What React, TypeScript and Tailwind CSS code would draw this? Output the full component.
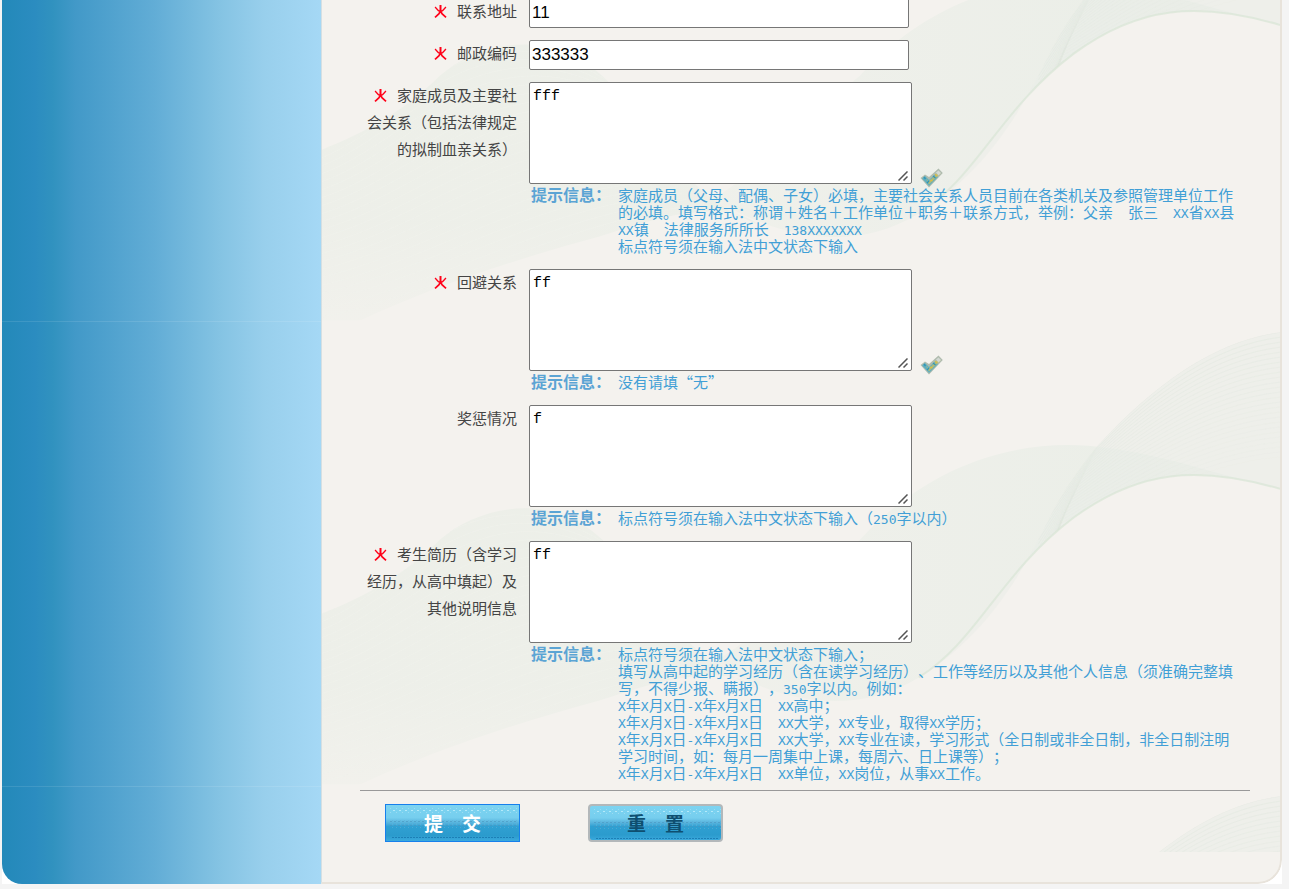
import React from "react";

const WAVE_TILES = [-144, 321, 786];

const LEFT_FAN =
  "M322 294 C365 277 405 255 440 220 C480 185 555 170 607 224 C650 270 690 345 760 369 C720 340 650 365 600 381 C500 408 410 440 340 475 L322 485 Z";
const RIGHT_FAN =
  "M1282 12 C1220 20 1160 60 1100 125 C1075 155 1060 180 1050 200 C1020 260 990 310 930 352 C980 315 1010 245 1075 198 C1140 150 1200 145 1282 169 Z";

function range(n: number) {
  return Array.from({ length: n }, (_, i) => i);
}

function Waves() {
  return (
    <svg
      className="absolute inset-0 h-full w-full"
      viewBox="322 0 960 884"
      preserveAspectRatio="none"
      aria-hidden="true"
    >
      <defs>
        <linearGradient id="ribbon" x1="0" y1="0" x2="1" y2="0">
          <stop offset="0" stopColor="#e9eee6" stopOpacity="0.4" />
          <stop offset="0.5" stopColor="#e8ede6" stopOpacity="0.6" />
          <stop offset="1" stopColor="#e2ebe1" stopOpacity="0.6" />
        </linearGradient>
        <linearGradient id="leftFade" x1="0" y1="0" x2="0" y2="1">
          <stop offset="0" stopColor="#e8ede5" stopOpacity="0.6" />
          <stop offset="0.6" stopColor="#e8ede5" stopOpacity="0.55" />
          <stop offset="1" stopColor="#e8ede5" stopOpacity="0.15" />
        </linearGradient>
        <clipPath id="tile">
          <rect x="322" y="0" width="960" height="465" />
        </clipPath>
        <clipPath id="lastTile">
          <rect x="322" y="0" width="960" height="68" />
        </clipPath>
        <clipPath id="leftFan">
          <path d={LEFT_FAN} />
        </clipPath>
        <clipPath id="rightFan">
          <path d={RIGHT_FAN} />
        </clipPath>
        <g id="wave">
          <path d={LEFT_FAN} fill="url(#leftFade)" />
          <path
            d="M680 359 C740 340 800 270 861 220 C930 145 1020 115 1110 128 C1170 136 1220 155 1282 169 C1200 145 1140 150 1075 198 C1000 255 980 320 920 358 C860 395 790 385 730 352 Z"
            fill="url(#ribbon)"
          />
          <path d={RIGHT_FAN} fill="#e9ede7" fillOpacity="0.55" />
          <g clipPath="url(#rightFan)">
            {range(26).map((i) => (
              <path
                key={`r${i}`}
                d={`M1282 ${12 + i * 5} C${1220 - i} ${20 + i * 5} ${1160 - i} ${60 + i * 5} ${1100 - i * 2} ${125 + i * 4} L1040 ${200 + i * 4}`}
                fill="none"
                stroke="#e0e7de"
                strokeOpacity={0.5 - i * 0.018}
              />
            ))}
          </g>
          <g clipPath="url(#leftFan)">
            {range(22).map((i) => (
              <path
                key={`l${i}`}
                d={`M322 ${294 + i * 8} C${400 + i * 3} ${262 + i * 8} ${470 + i * 4} ${140 + i * 11} ${607 + i * 4} ${224 + i * 6}`}
                fill="none"
                stroke="#f1f2ec"
                strokeOpacity="0.5"
              />
            ))}
          </g>
          <path
            d="M920 358 C980 320 1000 255 1075 198 C1140 150 1200 145 1282 169"
            fill="none"
            stroke="#d8e5d6"
            strokeOpacity="0.7"
            strokeWidth="2"
          />
        </g>
      </defs>
      {WAVE_TILES.map((y, i) => (
        <g key={y} transform={`translate(0 ${y})`}>
          <g clipPath={i === 2 ? "url(#lastTile)" : "url(#tile)"}>
            <use href="#wave" />
          </g>
        </g>
      ))}
    </svg>
  );
}

function RequiredMark() {
  return (
    <svg
      viewBox="0 0 13 13"
      className="mr-[10px] inline-block h-[13px] w-[13px] align-[-1px]"
      aria-hidden="true"
    >
      <g fill="none" stroke="#ff0018" strokeLinecap="square">
        <path d="M6.5 0.8V6" strokeWidth="2" />
        <path d="M1.5 2.5L4.5 5.8H8.5L11.5 2.5" strokeWidth="1.3" />
        <path d="M6.3 6.5L4.8 9L1.6 11.8M6.7 6.5L8.2 9L11.4 11.8" strokeWidth="1.7" />
      </g>
    </svg>
  );
}

function CheckMark() {
  return (
    <svg viewBox="0 0 23 20" className="-mb-1 ml-2 h-5 w-[23px]" aria-hidden="true">
      <path d="M0.5 10L5 6.5L9 9L18.5 0.5L22.8 5L9 19.5Z" fill="#b0bcae" />
      <path d="M2 10.5L5 8L9 12L15 6.5L18 9L9 18Z" fill="#5fafc0" />
      <path d="M5.5 10L8.5 13.5L19 3.5L20.5 5.5L9 16.5Z" fill="#c9bd62" fillOpacity="0.75" />
      <path d="M16 4.5L18.5 2.5L21 5L18.5 7.5Z" fill="#d3d9d3" />
      <path d="M13 8L15.5 10M7 15L9 13M4 9L5.5 11" stroke="#2f95b8" strokeWidth="1.3" />
      <path d="M10 12L12.5 13M15 6L17 8" stroke="#e0bf3c" strokeWidth="1" />
    </svg>
  );
}

/* Latin letters and digits take the half-width face beside the Chinese text. */
function Mixed({ text }: { text: string }) {
  return (
    <>
      {text.split(/([0-9A-Za-z-]+)/).map((part, i) =>
        i % 2 ? (
          <span key={i} className="font-['DejaVu_Sans_Mono',monospace] text-[13px] leading-none">
            {part}
          </span>
        ) : (
          part
        ),
      )}
    </>
  );
}

function Row({
  id,
  label,
  required,
  hint,
  children,
}: {
  id: string;
  label: string;
  required?: boolean;
  hint?: string[];
  children: React.ReactNode;
}) {
  return (
    <div className="flex items-start gap-3">
      <label htmlFor={id} className="-mt-px w-[150px] shrink-0 text-right text-[15px] leading-[27px] text-[#444]">
        {required && <RequiredMark />}
        {label}
      </label>
      <div className="min-w-0 flex-1">
        <div className="flex items-end">{children}</div>
        {hint && (
          <div className="mt-[2px] flex pr-[10px] pl-[2px] leading-[17px] text-[#419fd6]">
            <b className="w-[87px] shrink-0 text-base leading-[17px] text-[#5ba4d4]">提示信息：</b>
            <div className="min-w-0 flex-1 text-[15px] leading-[17px]">
              {hint.map((line) => (
                <p key={line}>
                  <Mixed text={line} />
                </p>
              ))}
            </div>
          </div>
        )}
      </div>
    </div>
  );
}

function TextInput({ id, value }: { id: string; value: string }) {
  return (
    <input
      id={id}
      type="text"
      defaultValue={value}
      className="h-[30px] w-[380px] rounded-[2px] border border-[#767676] bg-white px-[2px] font-['Liberation_Sans',sans-serif] text-[17px] text-black outline-none"
    />
  );
}

function TextArea({ id, value }: { id: string; value: string }) {
  return (
    <div className="relative">
      <textarea
        id={id}
        defaultValue={value}
        className="block h-[102px] w-[383px] resize-none rounded-[2px] border border-[#767676] bg-white px-[3px] py-[5px] font-['Liberation_Mono',monospace] text-[15px] leading-[17px] text-black outline-none"
      />
      <svg viewBox="0 0 10 10" className="pointer-events-none absolute right-1 bottom-[3px] h-[10px] w-[10px]" aria-hidden="true">
        <path d="M0.5 9.5L9.5 0.5M5.5 9.5L9.5 5.5" stroke="#555" strokeWidth="1.5" />
      </svg>
    </div>
  );
}

function ButtonFace({ id }: { id: string }) {
  return (
    <svg className="absolute inset-0 h-full w-full" aria-hidden="true">
      <defs>
        <pattern id={`${id}-dots`} width="6" height="4" patternUnits="userSpaceOnUse">
          <rect x="1" y="1" width="2" height="1" fill="#b4eafa" />
          <rect x="4" y="3" width="1" height="1" fill="#9bdcf2" />
        </pattern>
        <pattern id={`${id}-mesh`} width="4" height="4" patternUnits="userSpaceOnUse">
          <rect x="0" y="0" width="2" height="1" fill="#4a93bd" />
          <rect x="2" y="2" width="1" height="2" fill="#5fb0d8" />
        </pattern>
        <pattern id={`${id}-edge`} width="3" height="2" patternUnits="userSpaceOnUse">
          <rect width="2" height="1" fill="#1c7fb6" />
        </pattern>
      </defs>
      <rect x="3" y="3" width="128" height="5" fill={`url(#${id}-dots)`} />
      <rect x="3" y="15" width="128" height="8" fill={`url(#${id}-mesh)`} opacity="0.6" />
      <rect x="5" y="32" width="124" height="2" fill={`url(#${id}-edge)`} />
    </svg>
  );
}

const FACE =
  "relative h-[38px] w-[135px] overflow-hidden bg-[linear-gradient(#7dd4f1_0%,#76ceee_35%,#55b2dc_50%,#2fa0d2_60%,#2b9bcd_85%,#3aa9dc_100%)] text-[19px] font-bold";

export default function App() {
  return (
    <div
      className="min-h-screen overflow-hidden bg-[#f4f4f4] pr-[7px] pb-[5px] pl-[2px] font-['Noto_Sans_CJK_SC',sans-serif] [text-spacing-trim:space-all]"
      lang="zh-CN"
    >
      <div className="bg-white">
        <div className="flex overflow-hidden rounded-br-[24px] rounded-bl-[20px]">
          <aside className="relative w-[319px] shrink-0 bg-[linear-gradient(90deg,#2389b9_0%,#2b8cc0_10%,#3192bf_16%,#4299c8_23%,#62add6_48%,#84c3e3_68%,#98cfec_82%,#a5d8f5_100%)]">
            <div className="absolute top-[321px] h-px w-full bg-white/10" />
            <div className="absolute top-[786px] h-px w-full bg-white/10" />
          </aside>
          <main className="relative min-w-0 flex-1 overflow-hidden rounded-br-[24px] border-r-2 border-b-2 border-l border-[#e8e3db] border-l-[#d5dfe2] bg-[#f4f2ee]">
            <Waves />
            <form className="relative -mt-[2px] pr-[30px] pb-10 pl-[38px]" onSubmit={(e) => e.preventDefault()}>
              <div className="flex flex-col pl-[7px]">
                <div className="flex flex-col gap-3">
                  <Row id="address" label="联系地址" required>
                    <TextInput id="address" value="11" />
                  </Row>
                  <Row id="postcode" label="邮政编码" required>
                    <TextInput id="postcode" value="333333" />
                  </Row>
                </div>
                <div className="mt-3 flex flex-col gap-[15px]">
                  <Row
                    id="family"
                    label="家庭成员及主要社会关系（包括法律规定的拟制血亲关系）"
                    required
                    hint={[
                      "家庭成员（父母、配偶、子女）必填，主要社会关系人员目前在各类机关及参照管理单位工作的必填。填写格式：称谓＋姓名＋工作单位＋职务＋联系方式，举例：父亲　张三　XX省XX县XX镇　法律服务所所长　138XXXXXXX",
                      "标点符号须在输入法中文状态下输入",
                    ]}
                  >
                    <TextArea id="family" value="fff" />
                    <CheckMark />
                  </Row>
                  <Row id="avoid" label="回避关系" required hint={["没有请填“无”"]}>
                    <TextArea id="avoid" value="ff" />
                    <CheckMark />
                  </Row>
                  <Row id="awards" label="奖惩情况" hint={["标点符号须在输入法中文状态下输入（250字以内）"]}>
                    <TextArea id="awards" value="f" />
                  </Row>
                  <Row
                    id="resume"
                    label="考生简历（含学习经历，从高中填起）及其他说明信息"
                    required
                    hint={[
                      "标点符号须在输入法中文状态下输入；",
                      "填写从高中起的学习经历（含在读学习经历）、工作等经历以及其他个人信息（须准确完整填写，不得少报、瞒报），350字以内。例如：",
                      "X年X月X日-X年X月X日　XX高中；",
                      "X年X月X日-X年X月X日　XX大学，XX专业，取得XX学历；",
                      "X年X月X日-X年X月X日　XX大学，XX专业在读，学习形式（全日制或非全日制，非全日制注明学习时间，如：每月一周集中上课，每周六、日上课等）；",
                      "X年X月X日-X年X月X日　XX单位，XX岗位，从事XX工作。",
                    ]}
                  >
                    <TextArea id="resume" value="ff" />
                  </Row>
                </div>
              </div>
              <hr className="mt-[9px] border-t border-[#999]" />
              <div className="mt-[13px] flex gap-[68px] pl-[25px]">
                <button type="submit" className={`${FACE} border border-[#1680ec] text-white`}>
                  <ButtonFace id="submit" />
                  <span className="relative">提　交</span>
                </button>
                <button type="reset" className={`${FACE} rounded-[4px] border-2 border-[#b3b8ba] text-[#0e4f70]`}>
                  <ButtonFace id="reset" />
                  <span className="relative">重　置</span>
                </button>
              </div>
            </form>
          </main>
        </div>
      </div>
    </div>
  );
}
